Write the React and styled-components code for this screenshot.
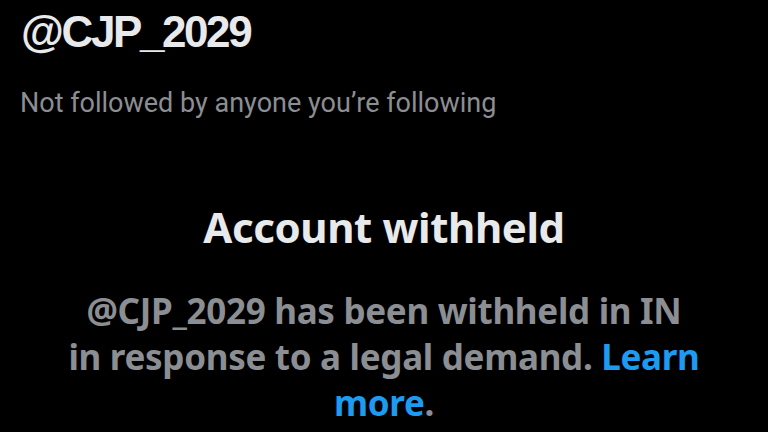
import React from 'react';
import styled, { createGlobalStyle } from 'styled-components';

const GlobalStyle = createGlobalStyle`
  html, body {
    margin: 0;
    padding: 0;
    background: #000;
  }
`;

const Styled = {
  Page: styled.div`
    width: 768px;
    height: 432px;
    overflow: hidden;
    background: #000;
    display: flex;
    flex-direction: column;
  `,
  Header: styled.div`
    padding: 6px 0 0 21px;
  `,
  Handle: styled.h1`
    margin: 0;
    font-family: 'Liberation Sans', Arial, sans-serif;
    font-weight: 700;
    font-size: 44px;
    line-height: 52px;
    letter-spacing: -2.4px;
    color: #e7e9ea;
  `,
  FollowNote: styled.p`
    margin: 29px 0 0 -1px;
    font-family: Roboto, 'Noto Sans', sans-serif;
    font-weight: 400;
    font-size: 27px;
    line-height: 32px;
    color: #8b8e92;
  `,
  Notice: styled.div`
    margin-top: 82px;
    display: flex;
    flex-direction: column;
    align-items: center;
    text-align: center;
  `,
  Title: styled.h2`
    margin: 0;
    font-family: 'Noto Sans', 'Open Sans', sans-serif;
    font-weight: 700;
    font-size: 42px;
    line-height: 52px;
    letter-spacing: -0.4px;
    color: #e7e9ea;
  `,
  Message: styled.p`
    margin: 35px 0 0;
    width: 660px;
    font-family: 'Noto Sans', 'Open Sans', sans-serif;
    font-weight: 700;
    font-size: 35px;
    line-height: 46px;
    letter-spacing: -0.3px;
    color: #8b8e92;
  `,
  Link: styled.a`
    color: #1d9bf0;
    text-decoration: none;
  `
};

const App = () => (
  <Styled.Page>
    <GlobalStyle />
    <Styled.Header>
      <Styled.Handle>@CJP_2029</Styled.Handle>
      <Styled.FollowNote>Not followed by anyone you’re following</Styled.FollowNote>
    </Styled.Header>
    <Styled.Notice>
      <Styled.Title>Account withheld</Styled.Title>
      <Styled.Message>
        @CJP_2029 has been withheld in IN
        <br />
        in response to a legal demand. <Styled.Link href="#">Learn more</Styled.Link>.
      </Styled.Message>
    </Styled.Notice>
  </Styled.Page>
);

export default App;
